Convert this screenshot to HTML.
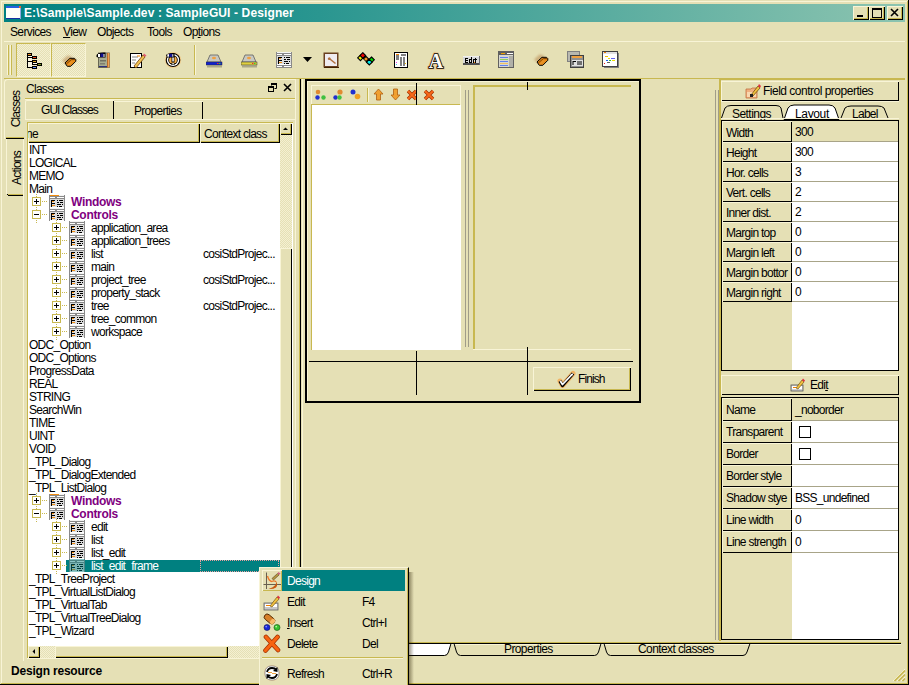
<!DOCTYPE html><html><head><meta charset="utf-8"><style>
html,body{margin:0;padding:0;}
body{width:909px;height:685px;position:relative;overflow:hidden;background:#E5E0B5;font-family:"Liberation Sans",sans-serif;}
div{position:absolute;box-sizing:border-box;}
.t{white-space:nowrap;line-height:1;color:#000;letter-spacing:-0.72px;}
.b{font-weight:bold;letter-spacing:0.2px;}
</style></head><body>
<div style="left:1px;top:1px;width:907px;height:1px;background:#F8F4D6"></div>
<div style="left:1px;top:1px;width:1px;height:683px;background:#F8F4D6"></div>
<div style="left:907px;top:1px;width:1px;height:683px;background:#C8B850"></div>
<div style="left:908px;top:0px;width:1px;height:685px;background:#000000"></div>
<div style="left:1px;top:683px;width:907px;height:1px;background:#C8B850"></div>
<div style="left:0px;top:684px;width:909px;height:1px;background:#000000"></div>
<div style="left:4px;top:4px;width:901px;height:18px;background:linear-gradient(to right,#008080 0%,#2a9690 35%,#8cc4b0 100%)"></div>
<svg style="position:absolute;left:6px;top:6px;" width="15" height="13" viewBox="0 0 15 13"><rect x="0" y="0" width="15" height="13" fill="#fffff8"/><rect x="0" y="0" width="15" height="2" fill="#2860e0"/><rect x="0" y="12" width="15" height="1" fill="#1830a0"/><rect x="14" y="1" width="1" height="12" fill="#90a8e0"/><rect x="13" y="0" width="2" height="2" fill="#e86030"/></svg>
<div class="t" style="left:24px;top:7px;font-size:12px;color:#fff;font-weight:bold;letter-spacing:0.12px">E:\Sample\Sample.dev : SampleGUI - Designer</div>
<div style="left:853px;top:6px;width:16px;height:14px;background:#E5E0B5;box-shadow: inset 1px 1px 0 #F8F4D6, inset -1px -1px 0 #000000, inset -2px -2px 0 #C8B850"></div>
<div style="left:869px;top:6px;width:16px;height:14px;background:#E5E0B5;box-shadow: inset 1px 1px 0 #F8F4D6, inset -1px -1px 0 #000000, inset -2px -2px 0 #C8B850"></div>
<div style="left:887px;top:6px;width:16px;height:14px;background:#E5E0B5;box-shadow: inset 1px 1px 0 #F8F4D6, inset -1px -1px 0 #000000, inset -2px -2px 0 #C8B850"></div>
<svg style="position:absolute;left:853px;top:6px;" width="16" height="14" viewBox="0 0 16 14"><rect x="4" y="9" width="6" height="2" fill="#000"/></svg>
<svg style="position:absolute;left:869px;top:6px;" width="16" height="14" viewBox="0 0 16 14"><rect x="3" y="2" width="9" height="9" fill="none" stroke="#000" stroke-width="1" transform="translate(0.5,0.5)"/><rect x="3" y="2" width="10" height="2" fill="#000"/></svg>
<svg style="position:absolute;left:887px;top:6px;" width="16" height="14" viewBox="0 0 16 14"><path d="M4 3 L11 10 M11 3 L4 10" stroke="#000" stroke-width="1.6"/></svg>
<div class="t" style="left:10px;top:26px;font-size:12px;letter-spacing:-0.63px">Services</div>
<div class="t" style="left:63px;top:26px;font-size:12px;letter-spacing:-0.63px"><u>V</u>iew</div>
<div class="t" style="left:97px;top:26px;font-size:12px;letter-spacing:-0.63px">Objects</div>
<div class="t" style="left:147px;top:26px;font-size:12px;letter-spacing:-0.63px">Tools</div>
<div class="t" style="left:183px;top:26px;font-size:12px;letter-spacing:-0.63px">Op<u>t</u>ions</div>
<div style="left:4px;top:41px;width:901px;height:1px;background:#F8F4D6"></div>
<div style="left:7px;top:45px;width:1px;height:30px;background:#F8F4D6"></div>
<div style="left:8px;top:45px;width:1px;height:30px;background:#C8B850"></div>
<div style="left:10px;top:45px;width:1px;height:30px;background:#F8F4D6"></div>
<div style="left:11px;top:45px;width:1px;height:30px;background:#C8B850"></div>
<div style="left:16px;top:43px;width:35px;height:34px;background-color:#E5E0B5;background-image:repeating-conic-gradient(#F4F0D2 0% 25%, #E5E0B5 0% 50%);background-size:2px 2px;border-top:1px solid #C8B850;border-left:1px solid #C8B850;border-right:1px solid #F8F4D6;border-bottom:1px solid #F8F4D6"></div>
<div style="left:51px;top:43px;width:35px;height:34px;background-color:#E5E0B5;background-image:repeating-conic-gradient(#F4F0D2 0% 25%, #E5E0B5 0% 50%);background-size:2px 2px;border-top:1px solid #C8B850;border-left:1px solid #C8B850;border-right:1px solid #F8F4D6;border-bottom:1px solid #F8F4D6"></div>
<div style="left:194px;top:45px;width:1px;height:30px;background:#C8B850"></div>
<div style="left:195px;top:45px;width:1px;height:30px;background:#F8F4D6"></div>
<div style="left:4px;top:78px;width:901px;height:1px;background:#C8B850"></div>
<svg style="position:absolute;left:26px;top:52px;" width="17" height="18" viewBox="0 0 17 18"><g fill="#000">
<rect x="1" y="1" width="1" height="15"/><rect x="1" y="5" width="5" height="1"/><rect x="1" y="9" width="5" height="1"/><rect x="1" y="15" width="5" height="1"/>
<rect x="6" y="10" width="1" height="3"/><rect x="6" y="12" width="5" height="1"/>
<rect x="1" y="1" width="5" height="3"/><rect x="6" y="4" width="5" height="3"/><rect x="6" y="8" width="5" height="3"/><rect x="11" y="11" width="5" height="3"/><rect x="6" y="14" width="5" height="3"/></g>
<rect x="2" y="4" width="4" height="1" fill="#fffbe8"/><rect x="2" y="6" width="4" height="3" fill="#f8f4e0"/><rect x="2" y="10" width="4" height="5" fill="#f8f4e0"/><rect x="7" y="11" width="4" height="1" fill="#fffbe8"/>
<rect x="2" y="2" width="3" height="1" fill="#f09020"/><rect x="7" y="5" width="3" height="1" fill="#f04818"/><rect x="7" y="9" width="3" height="1" fill="#d8a020"/><rect x="12" y="12" width="3" height="1" fill="#80a020"/><rect x="7" y="15" width="3" height="1" fill="#6090f0"/></svg>
<svg style="position:absolute;left:56px;top:50px;" width="22" height="20" viewBox="0 0 22 20"><defs><filter id="bl56" x="-50%" y="-50%" width="200%" height="200%"><feGaussianBlur stdDeviation="1.2"/></filter></defs>
<path d="M6 10.5 L11.5 5.5 L16 6.5 L15 12 L10 14 Z" fill="#b88850" opacity="0.55" filter="url(#bl56)"/>
<path d="M9 13 L14 8.3 L18.5 8.3 L19.8 9.6 L19.8 11.3 L14.8 16.3 L11.3 16.3 Z" fill="#e48a18" stroke="#000" stroke-width="1"/>
<path d="M10.3 14 L15.3 9.6 H19.5" stroke="#703800" stroke-width="0.9" fill="none"/><path d="M12 15.5 L16 11.5" stroke="#f0a040" stroke-width="0.8"/></svg>
<svg style="position:absolute;left:93px;top:50px;" width="20" height="20" viewBox="0 0 20 20"><rect x="5.5" y="3" width="11" height="14.5" fill="#a8ac90" stroke="#505040" stroke-width="0.8"/>
<rect x="14" y="3" width="2.5" height="14.5" fill="#f0a050"/><rect x="14" y="3" width="0.8" height="14.5" fill="#b06020"/>
<rect x="7" y="10" width="6" height="1.5" fill="#707060"/><rect x="7" y="13" width="5" height="1.5" fill="#808070"/><rect x="6" y="16" width="8" height="1" fill="#303080"/>
<path d="M3.5 5 Q5 2 12.5 2.5 L12.5 7.5 L5 7.5 L3.5 7 Z" fill="#000"/>
<rect x="5" y="4" width="2" height="3" fill="#fff"/><rect x="7.5" y="3.5" width="3" height="3.5" fill="#101090"/><rect x="10.5" y="4" width="1" height="3" fill="#fff"/></svg>
<svg style="position:absolute;left:129px;top:52px;" width="18" height="17" viewBox="0 0 18 17"><rect x="1.5" y="1.5" width="11" height="14" fill="#fff" stroke="#000"/>
<path d="M3 5 H9 M3 8 H7 M3 11 H6" stroke="#808080"/><path d="M8 4 H11" stroke="#f08000"/>
<path d="M5 14 L14 3 L16 5 L7 16 Z" fill="#f0c050" stroke="#704010" stroke-width="0.8"/>
<path d="M14 3 L15 1.5 L17.5 3.5 L16 5 Z" fill="#e06070"/></svg>
<svg style="position:absolute;left:162px;top:50px;" width="22" height="20" viewBox="0 0 22 20"><ellipse cx="11" cy="10" rx="8.2" ry="8" fill="#f8c070" opacity="0.6"/>
<ellipse cx="11" cy="10" rx="7.3" ry="7.1" fill="#000"/><ellipse cx="11" cy="10" rx="6.2" ry="6" fill="#fff"/>
<ellipse cx="11" cy="10" rx="4.8" ry="4.6" fill="#000"/><ellipse cx="11" cy="10" rx="3.9" ry="3.8" fill="#f8b048"/>
<rect x="9.5" y="6" width="3" height="6" fill="#000"/><rect x="10.3" y="6.5" width="1.5" height="5" fill="#fff"/>
<rect x="9.5" y="12.5" width="3" height="2.5" fill="#000"/><rect x="10.3" y="13" width="1.5" height="1.5" fill="#fff"/>
<path d="M4 5 Q5 3 12.5 3 L12.5 7.5 L5 7.5 Z" fill="#000"/><rect x="5.3" y="4.2" width="1.8" height="2.5" fill="#fff"/><rect x="7.2" y="3.8" width="3" height="3.2" fill="#101090"/><rect x="10.3" y="4.2" width="1" height="2.5" fill="#fff"/></svg>
<svg style="position:absolute;left:206px;top:54px;" width="17" height="15" viewBox="0 0 17 15"><path d="M4 1 H12 L15 8 H1 Z" fill="#c8c8c0" stroke="#606060" stroke-width="0.8"/>
<ellipse cx="8" cy="4" rx="2" ry="1.2" fill="#f0a040"/>
<rect x="0" y="8" width="16" height="3" fill="#1020d0" stroke="#303030" stroke-width="0.5"/>
<rect x="11" y="9" width="1.5" height="1" fill="#f03030"/><rect x="13" y="9" width="1.5" height="1" fill="#30d030"/>
<rect x="1" y="11.5" width="15" height="2" fill="#000" opacity="0.25"/></svg>
<svg style="position:absolute;left:241px;top:54px;" width="17" height="15" viewBox="0 0 17 15"><path d="M4 1 H12 L15 8 H1 Z" fill="#c8c8c0" stroke="#606060" stroke-width="0.8"/>
<ellipse cx="8" cy="4" rx="2" ry="1.2" fill="#f0a040"/>
<rect x="0" y="8" width="16" height="3" fill="#e0d040" stroke="#303030" stroke-width="0.5"/>
<rect x="11" y="9" width="1.5" height="1" fill="#f03030"/><rect x="13" y="9" width="1.5" height="1" fill="#30d030"/>
<rect x="1" y="11.5" width="15" height="2" fill="#000" opacity="0.25"/></svg>
<svg style="position:absolute;left:276px;top:52px;overflow:hidden" width="16" height="16" viewBox="0 0 16 16"><rect x="0" y="0" width="16" height="16" fill="#8a8a8a"/><rect x="1" y="0" width="14" height="1" fill="#f4f4f4"/>
<rect x="1" y="2" width="5" height="1" fill="#fff"/><rect x="8" y="2" width="7" height="1" fill="#fff"/>
<rect x="1" y="4" width="14" height="8" fill="#dcdcdc"/>
<g fill="#000"><rect x="2" y="5" width="4" height="1"/><rect x="2" y="5" width="1" height="3"/><rect x="2" y="8" width="4" height="1"/><rect x="2" y="8" width="1" height="4"/>
<rect x="8" y="5" width="1" height="1"/><rect x="10" y="5" width="4" height="1"/><rect x="8" y="7" width="2" height="1"/><rect x="11" y="7" width="3" height="1"/>
<rect x="8" y="9" width="4" height="1"/><rect x="13" y="9" width="1" height="1"/><rect x="8" y="11" width="1" height="1"/><rect x="10" y="11" width="3" height="1"/></g>
<rect x="3" y="6" width="2" height="1" fill="#f08c10"/><rect x="3" y="10" width="3" height="1" fill="#f08c10"/>
<rect x="1" y="12" width="14" height="1" fill="#fff"/>
<rect x="1" y="14" width="5" height="1" fill="#fff"/><rect x="8" y="14" width="7" height="1" fill="#fff"/></svg>
<svg style="position:absolute;left:303px;top:57px;" width="10" height="6" viewBox="0 0 10 6"><path d="M0 0 H9 L4.5 5 Z" fill="#000"/></svg>
<svg style="position:absolute;left:323px;top:52px;" width="16" height="16" viewBox="0 0 16 16"><rect x="0.5" y="0.5" width="15" height="15" fill="#6a4020"/><rect x="2" y="2" width="12" height="12" fill="#f0ecf0"/>
<path d="M5 6 Q7 4 8 7 L13 11 L12 12 L7 8 Q4 8 5 6 Z" fill="#b07040"/><rect x="1" y="15" width="15" height="1" fill="#402000"/></svg>
<svg style="position:absolute;left:357px;top:52px;" width="19" height="15" viewBox="0 0 19 15"><path d="M5.8 3.5 L12.3 10.2" stroke="#000" stroke-width="4.6"/>
<path d="M3.5 3 L6 5.8 L3.5 8.6 L0.7 5.8 Z" fill="#f0f000" stroke="#000" stroke-width="1.1"/>
<path d="M5.8 0.7 L8.6 3.5 L5.8 6.3 L3 3.5 Z" fill="#f00000" stroke="#000" stroke-width="1.1"/>
<circle cx="9" cy="7" r="1.6" fill="#f09020"/>
<path d="M14.5 5 L17.3 7.8 L14.5 10.6 L11.7 7.8 Z" fill="#00e000" stroke="#000" stroke-width="1.1"/>
<path d="M12.3 7.4 L15.1 10.2 L12.3 13 L9.5 10.2 Z" fill="#00f0f0" stroke="#000" stroke-width="1.1"/></svg>
<svg style="position:absolute;left:394px;top:52px;" width="14" height="16" viewBox="0 0 14 16"><rect x="0.5" y="0.5" width="13" height="15" fill="#fff" stroke="#000"/>
<path d="M2 3 H5 M7 3 H12 M2 5 H5 M2 7 H5 M7 5 V14 M10 5 V14" stroke="#000"/><rect x="2" y="2" width="3" height="1" fill="#f08000"/>
<rect x="2" y="10" width="1" height="1" fill="#f040f0"/><rect x="2" y="12" width="1" height="1" fill="#40c0f0"/><rect x="11" y="11" width="1" height="1" fill="#f0c000"/></svg>
<svg style="position:absolute;left:426px;top:50px;" width="20" height="20" viewBox="0 0 20 20"><text x="10" y="17.5" text-anchor="middle" font-family="Liberation Serif" font-size="20" font-weight="bold" fill="#fff" stroke="#f0a050" stroke-width="3.2" stroke-opacity="0.5" style="paint-order:stroke">A</text>
<text x="10" y="17.5" text-anchor="middle" font-family="Liberation Serif" font-size="20" font-weight="bold" fill="#fcfcf8" stroke="#000" stroke-width="1.7" style="paint-order:stroke">A</text></svg>
<svg style="position:absolute;left:463px;top:56px;" width="17" height="9" viewBox="0 0 17 9"><rect x="0" y="0" width="16" height="8" fill="#d8d8d8"/><rect x="0" y="0" width="16" height="1" fill="#f0f0f0"/><rect x="0" y="7" width="17" height="2" fill="#505050"/><rect x="16" y="0" width="1" height="9" fill="#707070"/>
<g fill="#000"><rect x="2" y="2" width="1" height="5"/><rect x="2" y="2" width="3" height="1"/><rect x="2" y="4" width="3" height="1"/><rect x="2" y="6" width="3" height="1"/>
<rect x="6" y="3" width="3" height="4"/><rect x="8" y="1" width="1" height="6"/><rect x="10" y="3" width="1" height="4"/><rect x="12" y="2" width="1" height="5"/><rect x="11" y="3" width="3" height="1"/></g>
<rect x="7" y="4" width="1" height="2" fill="#d8d8d8"/><rect x="11" y="6" width="1" height="1" fill="#f08000"/></svg>
<svg style="position:absolute;left:498px;top:51px;" width="17" height="17" viewBox="0 0 17 17"><rect x="0.5" y="0.5" width="15" height="16" fill="#d8d8d0" stroke="#606060"/>
<rect x="1" y="1" width="15" height="3" fill="#606060"/><rect x="3" y="2" width="4" height="1" fill="#f0a000"/><rect x="9" y="2" width="6" height="1" fill="#fff"/>
<rect x="2" y="6" width="8" height="1" fill="#6080f0"/><rect x="2" y="8" width="8" height="1" fill="#90d060"/><rect x="2" y="10" width="8" height="1" fill="#6080f0"/><rect x="2" y="12" width="8" height="1" fill="#f0c060"/><rect x="2" y="14" width="8" height="1" fill="#6080f0"/>
<rect x="11" y="5" width="4" height="11" fill="#b0b0a8"/></svg>
<svg style="position:absolute;left:528px;top:49px;" width="22" height="20" viewBox="0 0 22 20"><defs><filter id="bl528" x="-50%" y="-50%" width="200%" height="200%"><feGaussianBlur stdDeviation="1.2"/></filter></defs>
<path d="M6 10.5 L11.5 5.5 L16 6.5 L15 12 L10 14 Z" fill="#b88850" opacity="0.55" filter="url(#bl528)"/>
<path d="M9 13 L14 8.3 L18.5 8.3 L19.8 9.6 L19.8 11.3 L14.8 16.3 L11.3 16.3 Z" fill="#e48a18" stroke="#000" stroke-width="1"/>
<path d="M10.3 14 L15.3 9.6 H19.5" stroke="#703800" stroke-width="0.9" fill="none"/><path d="M12 15.5 L16 11.5" stroke="#f0a040" stroke-width="0.8"/></svg>
<svg style="position:absolute;left:567px;top:51px;" width="17" height="17" viewBox="0 0 17 17"><rect x="0.5" y="0.5" width="12" height="10" fill="#b8b8b0" stroke="#808080"/>
<rect x="3.5" y="4.5" width="13" height="12" fill="#909090" stroke="#404040"/>
<rect x="5" y="5" width="10" height="2" fill="#f0a040"/><rect x="5" y="9" width="11" height="6" fill="#e0e0e0"/>
<path d="M6 10.5 H9 M6 10 V14 M10 11 H15 M10 13 H15" stroke="#000"/></svg>
<svg style="position:absolute;left:602px;top:51px;" width="17" height="17" viewBox="0 0 17 17"><rect x="0.5" y="0.5" width="15" height="15" fill="#fff" stroke="#404040"/><rect x="16" y="2" width="1" height="15" fill="#808080"/><rect x="2" y="16" width="15" height="1" fill="#808080"/>
<rect x="1" y="1" width="14" height="2" fill="#e0e0e0"/><rect x="2" y="1" width="2" height="1" fill="#f08000"/>
<rect x="3" y="5" width="3" height="1" fill="#f0c000"/><rect x="6" y="7" width="2" height="1" fill="#f0e000"/><rect x="9" y="7" width="4" height="1" fill="#6060f0"/>
<rect x="4" y="9" width="2" height="1" fill="#2060f0"/><rect x="7" y="9" width="2" height="1" fill="#30c030"/><rect x="10" y="9" width="3" height="1" fill="#f0e000"/><rect x="2" y="12" width="1" height="1" fill="#f02020"/><rect x="5" y="11" width="3" height="1" fill="#606060"/></svg>
<div style="left:4px;top:79px;width:292px;height:60px;border-top:1px solid #F8F4D6;border-left:1px solid #F8F4D6;border-top-left-radius:4px"></div>
<div style="left:6px;top:137px;width:18px;height:1px;background:#C8B850"></div>
<div style="left:6px;top:138px;width:18px;height:1px;background:#000000"></div>
<div style="left:6px;top:139px;width:1px;height:55px;background:#F8F4D6"></div>
<div style="left:8px;top:194px;width:15px;height:1px;background:#C8B850"></div>
<div style="left:8px;top:195px;width:15px;height:1px;background:#000000"></div>
<div style="left:7px;top:194px;width:1px;height:1px;background:#000000"></div>
<div class="t" style="left:-3px;top:103px;width:38px;height:12px;font-size:12px;text-align:center;transform:rotate(-90deg);letter-spacing:-0.9px">Classes</div>
<div class="t" style="left:-2px;top:162px;width:38px;height:12px;font-size:12px;text-align:center;transform:rotate(-90deg);letter-spacing:-0.8px">Actions</div>
<div style="left:23px;top:139px;width:1px;height:522px;background:#F8F4D6"></div>
<div style="left:295px;top:80px;width:1px;height:581px;background:#F8F4D6"></div>
<div class="t" style="left:26px;top:83px;font-size:12px;">Classes</div>
<svg style="position:absolute;left:268px;top:83px;" width="9" height="9" viewBox="0 0 9 9"><path d="M3.5 0.5 H8.5 V5.5 H6.5 M3.5 0.5 V2.5" fill="none" stroke="#000"/><rect x="3" y="0" width="6" height="2" fill="#000"/><rect x="0.5" y="3.5" width="5" height="5" fill="none" stroke="#000"/><rect x="0" y="3" width="6" height="2" fill="#000"/></svg>
<svg style="position:absolute;left:283px;top:83px;" width="9" height="9" viewBox="0 0 9 9"><path d="M1 1 L8 8 M8 1 L1 8" stroke="#000" stroke-width="1.6"/></svg>
<div style="left:25px;top:98px;width:270px;height:1px;background:#C8B850"></div>
<div style="left:25px;top:99px;width:270px;height:1px;background:#F8F4D6"></div>
<div style="left:25px;top:100px;width:89px;height:19px;border-top:1px solid #F8F4D6;border-left:1px solid #F8F4D6;border-top-left-radius:2px"></div>
<div style="left:113px;top:101px;width:1px;height:18px;background:#000000"></div>
<div class="t" style="left:41px;top:104px;font-size:12px;letter-spacing:-0.95px">GUI Classes</div>
<div style="left:114px;top:101px;width:89px;height:18px;border-top:1px solid #F8F4D6;"></div>
<div style="left:202px;top:102px;width:1px;height:17px;background:#000000"></div>
<div class="t" style="left:134px;top:105px;font-size:12px;">Properties</div>
<div style="left:25px;top:119px;width:270px;height:1px;background:#F8F4D6"></div>
<div style="left:27px;top:122px;width:266px;height:536px;background:#fff;border-left:1px solid #C8B850;border-top:1px solid #C8B850"></div>
<div style="left:27px;top:658px;width:266px;height:1px;background:#F8F4D6"></div>
<div style="left:28px;top:123px;width:172px;height:20px;background:#E5E0B5;box-shadow: inset 1px 1px 0 #F8F4D6, inset -1px -1px 0 #000000, inset -2px -2px 0 #C8B850"></div>
<div style="left:200px;top:123px;width:80px;height:20px;background:#E5E0B5;box-shadow: inset 1px 1px 0 #F8F4D6, inset -1px -1px 0 #000000, inset -2px -2px 0 #C8B850"></div>
<div style="left:28px;top:123px;width:20px;height:18px;overflow:hidden">
<div class="t" style="left:-2px;top:5px;font-size:12px;">ne</div>
</div>
<div class="t" style="left:204px;top:128px;font-size:12px;">Context class</div>
<div style="left:280px;top:123px;width:12px;height:536px;background-color:#E5E0B5;background-image:repeating-conic-gradient(#F4F0D2 0% 25%, #E5E0B5 0% 50%);background-size:2px 2px"></div>
<div style="left:280px;top:123px;width:12px;height:12px;background:#E5E0B5;box-shadow: inset 1px 1px 0 #F8F4D6, inset -1px -1px 0 #000000, inset -2px -2px 0 #C8B850"></div>
<svg style="position:absolute;left:280px;top:123px;" width="12" height="12" viewBox="0 0 12 12"><path d="M3 7 H8 L5.5 4.5 Z" fill="#000"/></svg>
<div style="left:280px;top:248px;width:12px;height:398px;background:#E5E0B5;box-shadow: inset 1px 1px 0 #F8F4D6, inset -1px 0 0 #000000"></div>
<div style="left:28px;top:646px;width:252px;height:12px;background-color:#E5E0B5;background-image:repeating-conic-gradient(#F4F0D2 0% 25%, #E5E0B5 0% 50%);background-size:2px 2px"></div>
<div style="left:28px;top:646px;width:12px;height:12px;background:#E5E0B5;box-shadow: inset 1px 1px 0 #F8F4D6, inset -1px -1px 0 #000000, inset -2px -2px 0 #C8B850"></div>
<svg style="position:absolute;left:28px;top:646px;" width="12" height="12" viewBox="0 0 12 12"><path d="M7 3 V8 L4.5 5.5 Z" fill="#000"/></svg>
<div style="left:55px;top:646px;width:173px;height:12px;background:#E5E0B5;box-shadow: inset 1px 1px 0 #F8F4D6, inset -1px -1px 0 #000000, inset -2px -2px 0 #C8B850"></div>
<div style="left:280px;top:646px;width:12px;height:12px;background:#E5E0B5"></div>
<div style="left:28px;top:142px;width:252px;height:504px;overflow:hidden">
<div class="t" style="left:1px;top:2px;font-size:12px;">INT</div>
<div class="t" style="left:1px;top:15px;font-size:12px;">LOGICAL</div>
<div class="t" style="left:1px;top:28px;font-size:12px;">MEMO</div>
<div class="t" style="left:1px;top:41px;font-size:12px;">Main</div>
<div style="left:4px;top:55px;width:9px;height:9px;background:#fff;border:1px solid #C8B850"></div>
<svg style="position:absolute;left:4px;top:55px;" width="9" height="9" viewBox="0 0 9 9"><rect x="2" y="4" width="5" height="1" fill="#000"/><rect x="4" y="2" width="1" height="5" fill="#000"/></svg>
<svg style="position:absolute;left:13px;top:59px;" width="6" height="1" viewBox="0 0 6 1"><rect x="1" y="0" width="1" height="1" fill="#C8B850"/><rect x="3" y="0" width="1" height="1" fill="#C8B850"/><rect x="5" y="0" width="1" height="1" fill="#C8B850"/></svg>
<svg style="position:absolute;left:8px;top:51px;" width="1" height="4" viewBox="0 0 1 4"><rect x="0" y="1" width="1" height="1" fill="#C8B850"/><rect x="0" y="3" width="1" height="1" fill="#C8B850"/></svg>
<svg style="position:absolute;left:8px;top:64px;" width="1" height="4" viewBox="0 0 1 4"><rect x="0" y="1" width="1" height="1" fill="#C8B850"/><rect x="0" y="3" width="1" height="1" fill="#C8B850"/></svg>
<svg style="position:absolute;left:21px;top:53px;overflow:hidden" width="16" height="13" viewBox="0 0 16 13"><rect x="0" y="0" width="16" height="16" fill="#8a8a8a"/><rect x="1" y="0" width="14" height="1" fill="#f4f4f4"/>
<rect x="1" y="2" width="5" height="1" fill="#fff"/><rect x="8" y="2" width="7" height="1" fill="#fff"/>
<rect x="1" y="4" width="14" height="8" fill="#dcdcdc"/>
<g fill="#000"><rect x="2" y="5" width="4" height="1"/><rect x="2" y="5" width="1" height="3"/><rect x="2" y="8" width="4" height="1"/><rect x="2" y="8" width="1" height="4"/>
<rect x="8" y="5" width="1" height="1"/><rect x="10" y="5" width="4" height="1"/><rect x="8" y="7" width="2" height="1"/><rect x="11" y="7" width="3" height="1"/>
<rect x="8" y="9" width="4" height="1"/><rect x="13" y="9" width="1" height="1"/><rect x="8" y="11" width="1" height="1"/><rect x="10" y="11" width="3" height="1"/></g>
<rect x="3" y="6" width="2" height="1" fill="#f08c10"/><rect x="3" y="10" width="3" height="1" fill="#f08c10"/>
<rect x="1" y="12" width="14" height="1" fill="#fff"/>
<rect x="1" y="14" width="5" height="1" fill="#fff"/><rect x="8" y="14" width="7" height="1" fill="#fff"/><rect x="1" y="0" width="9" height="1" fill="#f08c10"/></svg>
<div class="t" style="left:43px;top:54px;font-size:12px;color:#800080;font-weight:bold;letter-spacing:-0.3px">Windows</div>
<div style="left:4px;top:68px;width:9px;height:9px;background:#fff;border:1px solid #C8B850"></div>
<svg style="position:absolute;left:4px;top:68px;" width="9" height="9" viewBox="0 0 9 9"><rect x="2" y="4" width="5" height="1" fill="#000"/></svg>
<svg style="position:absolute;left:13px;top:72px;" width="6" height="1" viewBox="0 0 6 1"><rect x="1" y="0" width="1" height="1" fill="#C8B850"/><rect x="3" y="0" width="1" height="1" fill="#C8B850"/><rect x="5" y="0" width="1" height="1" fill="#C8B850"/></svg>
<svg style="position:absolute;left:8px;top:64px;" width="1" height="4" viewBox="0 0 1 4"><rect x="0" y="1" width="1" height="1" fill="#C8B850"/><rect x="0" y="3" width="1" height="1" fill="#C8B850"/></svg>
<svg style="position:absolute;left:8px;top:77px;" width="1" height="4" viewBox="0 0 1 4"><rect x="0" y="1" width="1" height="1" fill="#C8B850"/><rect x="0" y="3" width="1" height="1" fill="#C8B850"/></svg>
<svg style="position:absolute;left:21px;top:66px;overflow:hidden" width="16" height="13" viewBox="0 0 16 13"><rect x="0" y="0" width="16" height="16" fill="#8a8a8a"/><rect x="1" y="0" width="14" height="1" fill="#f4f4f4"/>
<rect x="1" y="2" width="5" height="1" fill="#fff"/><rect x="8" y="2" width="7" height="1" fill="#fff"/>
<rect x="1" y="4" width="14" height="8" fill="#dcdcdc"/>
<g fill="#000"><rect x="2" y="5" width="4" height="1"/><rect x="2" y="5" width="1" height="3"/><rect x="2" y="8" width="4" height="1"/><rect x="2" y="8" width="1" height="4"/>
<rect x="8" y="5" width="1" height="1"/><rect x="10" y="5" width="4" height="1"/><rect x="8" y="7" width="2" height="1"/><rect x="11" y="7" width="3" height="1"/>
<rect x="8" y="9" width="4" height="1"/><rect x="13" y="9" width="1" height="1"/><rect x="8" y="11" width="1" height="1"/><rect x="10" y="11" width="3" height="1"/></g>
<rect x="3" y="6" width="2" height="1" fill="#f08c10"/><rect x="3" y="10" width="3" height="1" fill="#f08c10"/>
<rect x="1" y="12" width="14" height="1" fill="#fff"/>
<rect x="1" y="14" width="5" height="1" fill="#fff"/><rect x="8" y="14" width="7" height="1" fill="#fff"/></svg>
<div class="t" style="left:43px;top:67px;font-size:12px;color:#800080;font-weight:bold;letter-spacing:-0.3px">Controls</div>
<div style="left:24px;top:81px;width:9px;height:9px;background:#fff;border:1px solid #C8B850"></div>
<svg style="position:absolute;left:24px;top:81px;" width="9" height="9" viewBox="0 0 9 9"><rect x="2" y="4" width="5" height="1" fill="#000"/><rect x="4" y="2" width="1" height="5" fill="#000"/></svg>
<svg style="position:absolute;left:33px;top:85px;" width="6" height="1" viewBox="0 0 6 1"><rect x="1" y="0" width="1" height="1" fill="#C8B850"/><rect x="3" y="0" width="1" height="1" fill="#C8B850"/><rect x="5" y="0" width="1" height="1" fill="#C8B850"/></svg>
<svg style="position:absolute;left:28px;top:77px;" width="1" height="4" viewBox="0 0 1 4"><rect x="0" y="1" width="1" height="1" fill="#C8B850"/><rect x="0" y="3" width="1" height="1" fill="#C8B850"/></svg>
<svg style="position:absolute;left:28px;top:90px;" width="1" height="4" viewBox="0 0 1 4"><rect x="0" y="1" width="1" height="1" fill="#C8B850"/><rect x="0" y="3" width="1" height="1" fill="#C8B850"/></svg>
<svg style="position:absolute;left:41px;top:79px;overflow:hidden" width="16" height="13" viewBox="0 0 16 13"><rect x="0" y="0" width="16" height="16" fill="#8a8a8a"/><rect x="1" y="0" width="14" height="1" fill="#f4f4f4"/>
<rect x="1" y="2" width="5" height="1" fill="#fff"/><rect x="8" y="2" width="7" height="1" fill="#fff"/>
<rect x="1" y="4" width="14" height="8" fill="#dcdcdc"/>
<g fill="#000"><rect x="2" y="5" width="4" height="1"/><rect x="2" y="5" width="1" height="3"/><rect x="2" y="8" width="4" height="1"/><rect x="2" y="8" width="1" height="4"/>
<rect x="8" y="5" width="1" height="1"/><rect x="10" y="5" width="4" height="1"/><rect x="8" y="7" width="2" height="1"/><rect x="11" y="7" width="3" height="1"/>
<rect x="8" y="9" width="4" height="1"/><rect x="13" y="9" width="1" height="1"/><rect x="8" y="11" width="1" height="1"/><rect x="10" y="11" width="3" height="1"/></g>
<rect x="3" y="6" width="2" height="1" fill="#f08c10"/><rect x="3" y="10" width="3" height="1" fill="#f08c10"/>
<rect x="1" y="12" width="14" height="1" fill="#fff"/>
<rect x="1" y="14" width="5" height="1" fill="#fff"/><rect x="8" y="14" width="7" height="1" fill="#fff"/></svg>
<div class="t" style="left:63px;top:80px;font-size:12px;color:#000">application_area</div>
<div style="left:24px;top:94px;width:9px;height:9px;background:#fff;border:1px solid #C8B850"></div>
<svg style="position:absolute;left:24px;top:94px;" width="9" height="9" viewBox="0 0 9 9"><rect x="2" y="4" width="5" height="1" fill="#000"/><rect x="4" y="2" width="1" height="5" fill="#000"/></svg>
<svg style="position:absolute;left:33px;top:98px;" width="6" height="1" viewBox="0 0 6 1"><rect x="1" y="0" width="1" height="1" fill="#C8B850"/><rect x="3" y="0" width="1" height="1" fill="#C8B850"/><rect x="5" y="0" width="1" height="1" fill="#C8B850"/></svg>
<svg style="position:absolute;left:28px;top:90px;" width="1" height="4" viewBox="0 0 1 4"><rect x="0" y="1" width="1" height="1" fill="#C8B850"/><rect x="0" y="3" width="1" height="1" fill="#C8B850"/></svg>
<svg style="position:absolute;left:28px;top:103px;" width="1" height="4" viewBox="0 0 1 4"><rect x="0" y="1" width="1" height="1" fill="#C8B850"/><rect x="0" y="3" width="1" height="1" fill="#C8B850"/></svg>
<svg style="position:absolute;left:41px;top:92px;overflow:hidden" width="16" height="13" viewBox="0 0 16 13"><rect x="0" y="0" width="16" height="16" fill="#8a8a8a"/><rect x="1" y="0" width="14" height="1" fill="#f4f4f4"/>
<rect x="1" y="2" width="5" height="1" fill="#fff"/><rect x="8" y="2" width="7" height="1" fill="#fff"/>
<rect x="1" y="4" width="14" height="8" fill="#dcdcdc"/>
<g fill="#000"><rect x="2" y="5" width="4" height="1"/><rect x="2" y="5" width="1" height="3"/><rect x="2" y="8" width="4" height="1"/><rect x="2" y="8" width="1" height="4"/>
<rect x="8" y="5" width="1" height="1"/><rect x="10" y="5" width="4" height="1"/><rect x="8" y="7" width="2" height="1"/><rect x="11" y="7" width="3" height="1"/>
<rect x="8" y="9" width="4" height="1"/><rect x="13" y="9" width="1" height="1"/><rect x="8" y="11" width="1" height="1"/><rect x="10" y="11" width="3" height="1"/></g>
<rect x="3" y="6" width="2" height="1" fill="#f08c10"/><rect x="3" y="10" width="3" height="1" fill="#f08c10"/>
<rect x="1" y="12" width="14" height="1" fill="#fff"/>
<rect x="1" y="14" width="5" height="1" fill="#fff"/><rect x="8" y="14" width="7" height="1" fill="#fff"/></svg>
<div class="t" style="left:63px;top:93px;font-size:12px;color:#000">application_trees</div>
<div style="left:24px;top:107px;width:9px;height:9px;background:#fff;border:1px solid #C8B850"></div>
<svg style="position:absolute;left:24px;top:107px;" width="9" height="9" viewBox="0 0 9 9"><rect x="2" y="4" width="5" height="1" fill="#000"/><rect x="4" y="2" width="1" height="5" fill="#000"/></svg>
<svg style="position:absolute;left:33px;top:111px;" width="6" height="1" viewBox="0 0 6 1"><rect x="1" y="0" width="1" height="1" fill="#C8B850"/><rect x="3" y="0" width="1" height="1" fill="#C8B850"/><rect x="5" y="0" width="1" height="1" fill="#C8B850"/></svg>
<svg style="position:absolute;left:28px;top:103px;" width="1" height="4" viewBox="0 0 1 4"><rect x="0" y="1" width="1" height="1" fill="#C8B850"/><rect x="0" y="3" width="1" height="1" fill="#C8B850"/></svg>
<svg style="position:absolute;left:28px;top:116px;" width="1" height="4" viewBox="0 0 1 4"><rect x="0" y="1" width="1" height="1" fill="#C8B850"/><rect x="0" y="3" width="1" height="1" fill="#C8B850"/></svg>
<svg style="position:absolute;left:41px;top:105px;overflow:hidden" width="16" height="13" viewBox="0 0 16 13"><rect x="0" y="0" width="16" height="16" fill="#8a8a8a"/><rect x="1" y="0" width="14" height="1" fill="#f4f4f4"/>
<rect x="1" y="2" width="5" height="1" fill="#fff"/><rect x="8" y="2" width="7" height="1" fill="#fff"/>
<rect x="1" y="4" width="14" height="8" fill="#dcdcdc"/>
<g fill="#000"><rect x="2" y="5" width="4" height="1"/><rect x="2" y="5" width="1" height="3"/><rect x="2" y="8" width="4" height="1"/><rect x="2" y="8" width="1" height="4"/>
<rect x="8" y="5" width="1" height="1"/><rect x="10" y="5" width="4" height="1"/><rect x="8" y="7" width="2" height="1"/><rect x="11" y="7" width="3" height="1"/>
<rect x="8" y="9" width="4" height="1"/><rect x="13" y="9" width="1" height="1"/><rect x="8" y="11" width="1" height="1"/><rect x="10" y="11" width="3" height="1"/></g>
<rect x="3" y="6" width="2" height="1" fill="#f08c10"/><rect x="3" y="10" width="3" height="1" fill="#f08c10"/>
<rect x="1" y="12" width="14" height="1" fill="#fff"/>
<rect x="1" y="14" width="5" height="1" fill="#fff"/><rect x="8" y="14" width="7" height="1" fill="#fff"/></svg>
<div class="t" style="left:63px;top:106px;font-size:12px;color:#000">list</div>
<div class="t" style="left:175px;top:106px;font-size:12px;">cosiStdProjec...</div>
<div style="left:24px;top:120px;width:9px;height:9px;background:#fff;border:1px solid #C8B850"></div>
<svg style="position:absolute;left:24px;top:120px;" width="9" height="9" viewBox="0 0 9 9"><rect x="2" y="4" width="5" height="1" fill="#000"/><rect x="4" y="2" width="1" height="5" fill="#000"/></svg>
<svg style="position:absolute;left:33px;top:124px;" width="6" height="1" viewBox="0 0 6 1"><rect x="1" y="0" width="1" height="1" fill="#C8B850"/><rect x="3" y="0" width="1" height="1" fill="#C8B850"/><rect x="5" y="0" width="1" height="1" fill="#C8B850"/></svg>
<svg style="position:absolute;left:28px;top:116px;" width="1" height="4" viewBox="0 0 1 4"><rect x="0" y="1" width="1" height="1" fill="#C8B850"/><rect x="0" y="3" width="1" height="1" fill="#C8B850"/></svg>
<svg style="position:absolute;left:28px;top:129px;" width="1" height="4" viewBox="0 0 1 4"><rect x="0" y="1" width="1" height="1" fill="#C8B850"/><rect x="0" y="3" width="1" height="1" fill="#C8B850"/></svg>
<svg style="position:absolute;left:41px;top:118px;overflow:hidden" width="16" height="13" viewBox="0 0 16 13"><rect x="0" y="0" width="16" height="16" fill="#8a8a8a"/><rect x="1" y="0" width="14" height="1" fill="#f4f4f4"/>
<rect x="1" y="2" width="5" height="1" fill="#fff"/><rect x="8" y="2" width="7" height="1" fill="#fff"/>
<rect x="1" y="4" width="14" height="8" fill="#dcdcdc"/>
<g fill="#000"><rect x="2" y="5" width="4" height="1"/><rect x="2" y="5" width="1" height="3"/><rect x="2" y="8" width="4" height="1"/><rect x="2" y="8" width="1" height="4"/>
<rect x="8" y="5" width="1" height="1"/><rect x="10" y="5" width="4" height="1"/><rect x="8" y="7" width="2" height="1"/><rect x="11" y="7" width="3" height="1"/>
<rect x="8" y="9" width="4" height="1"/><rect x="13" y="9" width="1" height="1"/><rect x="8" y="11" width="1" height="1"/><rect x="10" y="11" width="3" height="1"/></g>
<rect x="3" y="6" width="2" height="1" fill="#f08c10"/><rect x="3" y="10" width="3" height="1" fill="#f08c10"/>
<rect x="1" y="12" width="14" height="1" fill="#fff"/>
<rect x="1" y="14" width="5" height="1" fill="#fff"/><rect x="8" y="14" width="7" height="1" fill="#fff"/></svg>
<div class="t" style="left:63px;top:119px;font-size:12px;color:#000">main</div>
<div style="left:24px;top:133px;width:9px;height:9px;background:#fff;border:1px solid #C8B850"></div>
<svg style="position:absolute;left:24px;top:133px;" width="9" height="9" viewBox="0 0 9 9"><rect x="2" y="4" width="5" height="1" fill="#000"/><rect x="4" y="2" width="1" height="5" fill="#000"/></svg>
<svg style="position:absolute;left:33px;top:137px;" width="6" height="1" viewBox="0 0 6 1"><rect x="1" y="0" width="1" height="1" fill="#C8B850"/><rect x="3" y="0" width="1" height="1" fill="#C8B850"/><rect x="5" y="0" width="1" height="1" fill="#C8B850"/></svg>
<svg style="position:absolute;left:28px;top:129px;" width="1" height="4" viewBox="0 0 1 4"><rect x="0" y="1" width="1" height="1" fill="#C8B850"/><rect x="0" y="3" width="1" height="1" fill="#C8B850"/></svg>
<svg style="position:absolute;left:28px;top:142px;" width="1" height="4" viewBox="0 0 1 4"><rect x="0" y="1" width="1" height="1" fill="#C8B850"/><rect x="0" y="3" width="1" height="1" fill="#C8B850"/></svg>
<svg style="position:absolute;left:41px;top:131px;overflow:hidden" width="16" height="13" viewBox="0 0 16 13"><rect x="0" y="0" width="16" height="16" fill="#8a8a8a"/><rect x="1" y="0" width="14" height="1" fill="#f4f4f4"/>
<rect x="1" y="2" width="5" height="1" fill="#fff"/><rect x="8" y="2" width="7" height="1" fill="#fff"/>
<rect x="1" y="4" width="14" height="8" fill="#dcdcdc"/>
<g fill="#000"><rect x="2" y="5" width="4" height="1"/><rect x="2" y="5" width="1" height="3"/><rect x="2" y="8" width="4" height="1"/><rect x="2" y="8" width="1" height="4"/>
<rect x="8" y="5" width="1" height="1"/><rect x="10" y="5" width="4" height="1"/><rect x="8" y="7" width="2" height="1"/><rect x="11" y="7" width="3" height="1"/>
<rect x="8" y="9" width="4" height="1"/><rect x="13" y="9" width="1" height="1"/><rect x="8" y="11" width="1" height="1"/><rect x="10" y="11" width="3" height="1"/></g>
<rect x="3" y="6" width="2" height="1" fill="#f08c10"/><rect x="3" y="10" width="3" height="1" fill="#f08c10"/>
<rect x="1" y="12" width="14" height="1" fill="#fff"/>
<rect x="1" y="14" width="5" height="1" fill="#fff"/><rect x="8" y="14" width="7" height="1" fill="#fff"/></svg>
<div class="t" style="left:63px;top:132px;font-size:12px;color:#000">project_tree</div>
<div class="t" style="left:175px;top:132px;font-size:12px;">cosiStdProjec...</div>
<div style="left:24px;top:146px;width:9px;height:9px;background:#fff;border:1px solid #C8B850"></div>
<svg style="position:absolute;left:24px;top:146px;" width="9" height="9" viewBox="0 0 9 9"><rect x="2" y="4" width="5" height="1" fill="#000"/><rect x="4" y="2" width="1" height="5" fill="#000"/></svg>
<svg style="position:absolute;left:33px;top:150px;" width="6" height="1" viewBox="0 0 6 1"><rect x="1" y="0" width="1" height="1" fill="#C8B850"/><rect x="3" y="0" width="1" height="1" fill="#C8B850"/><rect x="5" y="0" width="1" height="1" fill="#C8B850"/></svg>
<svg style="position:absolute;left:28px;top:142px;" width="1" height="4" viewBox="0 0 1 4"><rect x="0" y="1" width="1" height="1" fill="#C8B850"/><rect x="0" y="3" width="1" height="1" fill="#C8B850"/></svg>
<svg style="position:absolute;left:28px;top:155px;" width="1" height="4" viewBox="0 0 1 4"><rect x="0" y="1" width="1" height="1" fill="#C8B850"/><rect x="0" y="3" width="1" height="1" fill="#C8B850"/></svg>
<svg style="position:absolute;left:41px;top:144px;overflow:hidden" width="16" height="13" viewBox="0 0 16 13"><rect x="0" y="0" width="16" height="16" fill="#8a8a8a"/><rect x="1" y="0" width="14" height="1" fill="#f4f4f4"/>
<rect x="1" y="2" width="5" height="1" fill="#fff"/><rect x="8" y="2" width="7" height="1" fill="#fff"/>
<rect x="1" y="4" width="14" height="8" fill="#dcdcdc"/>
<g fill="#000"><rect x="2" y="5" width="4" height="1"/><rect x="2" y="5" width="1" height="3"/><rect x="2" y="8" width="4" height="1"/><rect x="2" y="8" width="1" height="4"/>
<rect x="8" y="5" width="1" height="1"/><rect x="10" y="5" width="4" height="1"/><rect x="8" y="7" width="2" height="1"/><rect x="11" y="7" width="3" height="1"/>
<rect x="8" y="9" width="4" height="1"/><rect x="13" y="9" width="1" height="1"/><rect x="8" y="11" width="1" height="1"/><rect x="10" y="11" width="3" height="1"/></g>
<rect x="3" y="6" width="2" height="1" fill="#f08c10"/><rect x="3" y="10" width="3" height="1" fill="#f08c10"/>
<rect x="1" y="12" width="14" height="1" fill="#fff"/>
<rect x="1" y="14" width="5" height="1" fill="#fff"/><rect x="8" y="14" width="7" height="1" fill="#fff"/></svg>
<div class="t" style="left:63px;top:145px;font-size:12px;color:#000">property_stack</div>
<div style="left:24px;top:159px;width:9px;height:9px;background:#fff;border:1px solid #C8B850"></div>
<svg style="position:absolute;left:24px;top:159px;" width="9" height="9" viewBox="0 0 9 9"><rect x="2" y="4" width="5" height="1" fill="#000"/><rect x="4" y="2" width="1" height="5" fill="#000"/></svg>
<svg style="position:absolute;left:33px;top:163px;" width="6" height="1" viewBox="0 0 6 1"><rect x="1" y="0" width="1" height="1" fill="#C8B850"/><rect x="3" y="0" width="1" height="1" fill="#C8B850"/><rect x="5" y="0" width="1" height="1" fill="#C8B850"/></svg>
<svg style="position:absolute;left:28px;top:155px;" width="1" height="4" viewBox="0 0 1 4"><rect x="0" y="1" width="1" height="1" fill="#C8B850"/><rect x="0" y="3" width="1" height="1" fill="#C8B850"/></svg>
<svg style="position:absolute;left:28px;top:168px;" width="1" height="4" viewBox="0 0 1 4"><rect x="0" y="1" width="1" height="1" fill="#C8B850"/><rect x="0" y="3" width="1" height="1" fill="#C8B850"/></svg>
<svg style="position:absolute;left:41px;top:157px;overflow:hidden" width="16" height="13" viewBox="0 0 16 13"><rect x="0" y="0" width="16" height="16" fill="#8a8a8a"/><rect x="1" y="0" width="14" height="1" fill="#f4f4f4"/>
<rect x="1" y="2" width="5" height="1" fill="#fff"/><rect x="8" y="2" width="7" height="1" fill="#fff"/>
<rect x="1" y="4" width="14" height="8" fill="#dcdcdc"/>
<g fill="#000"><rect x="2" y="5" width="4" height="1"/><rect x="2" y="5" width="1" height="3"/><rect x="2" y="8" width="4" height="1"/><rect x="2" y="8" width="1" height="4"/>
<rect x="8" y="5" width="1" height="1"/><rect x="10" y="5" width="4" height="1"/><rect x="8" y="7" width="2" height="1"/><rect x="11" y="7" width="3" height="1"/>
<rect x="8" y="9" width="4" height="1"/><rect x="13" y="9" width="1" height="1"/><rect x="8" y="11" width="1" height="1"/><rect x="10" y="11" width="3" height="1"/></g>
<rect x="3" y="6" width="2" height="1" fill="#f08c10"/><rect x="3" y="10" width="3" height="1" fill="#f08c10"/>
<rect x="1" y="12" width="14" height="1" fill="#fff"/>
<rect x="1" y="14" width="5" height="1" fill="#fff"/><rect x="8" y="14" width="7" height="1" fill="#fff"/></svg>
<div class="t" style="left:63px;top:158px;font-size:12px;color:#000">tree</div>
<div class="t" style="left:175px;top:158px;font-size:12px;">cosiStdProjec...</div>
<div style="left:24px;top:172px;width:9px;height:9px;background:#fff;border:1px solid #C8B850"></div>
<svg style="position:absolute;left:24px;top:172px;" width="9" height="9" viewBox="0 0 9 9"><rect x="2" y="4" width="5" height="1" fill="#000"/><rect x="4" y="2" width="1" height="5" fill="#000"/></svg>
<svg style="position:absolute;left:33px;top:176px;" width="6" height="1" viewBox="0 0 6 1"><rect x="1" y="0" width="1" height="1" fill="#C8B850"/><rect x="3" y="0" width="1" height="1" fill="#C8B850"/><rect x="5" y="0" width="1" height="1" fill="#C8B850"/></svg>
<svg style="position:absolute;left:28px;top:168px;" width="1" height="4" viewBox="0 0 1 4"><rect x="0" y="1" width="1" height="1" fill="#C8B850"/><rect x="0" y="3" width="1" height="1" fill="#C8B850"/></svg>
<svg style="position:absolute;left:28px;top:181px;" width="1" height="4" viewBox="0 0 1 4"><rect x="0" y="1" width="1" height="1" fill="#C8B850"/><rect x="0" y="3" width="1" height="1" fill="#C8B850"/></svg>
<svg style="position:absolute;left:41px;top:170px;overflow:hidden" width="16" height="13" viewBox="0 0 16 13"><rect x="0" y="0" width="16" height="16" fill="#8a8a8a"/><rect x="1" y="0" width="14" height="1" fill="#f4f4f4"/>
<rect x="1" y="2" width="5" height="1" fill="#fff"/><rect x="8" y="2" width="7" height="1" fill="#fff"/>
<rect x="1" y="4" width="14" height="8" fill="#dcdcdc"/>
<g fill="#000"><rect x="2" y="5" width="4" height="1"/><rect x="2" y="5" width="1" height="3"/><rect x="2" y="8" width="4" height="1"/><rect x="2" y="8" width="1" height="4"/>
<rect x="8" y="5" width="1" height="1"/><rect x="10" y="5" width="4" height="1"/><rect x="8" y="7" width="2" height="1"/><rect x="11" y="7" width="3" height="1"/>
<rect x="8" y="9" width="4" height="1"/><rect x="13" y="9" width="1" height="1"/><rect x="8" y="11" width="1" height="1"/><rect x="10" y="11" width="3" height="1"/></g>
<rect x="3" y="6" width="2" height="1" fill="#f08c10"/><rect x="3" y="10" width="3" height="1" fill="#f08c10"/>
<rect x="1" y="12" width="14" height="1" fill="#fff"/>
<rect x="1" y="14" width="5" height="1" fill="#fff"/><rect x="8" y="14" width="7" height="1" fill="#fff"/></svg>
<div class="t" style="left:63px;top:171px;font-size:12px;color:#000">tree_common</div>
<div style="left:24px;top:185px;width:9px;height:9px;background:#fff;border:1px solid #C8B850"></div>
<svg style="position:absolute;left:24px;top:185px;" width="9" height="9" viewBox="0 0 9 9"><rect x="2" y="4" width="5" height="1" fill="#000"/><rect x="4" y="2" width="1" height="5" fill="#000"/></svg>
<svg style="position:absolute;left:33px;top:189px;" width="6" height="1" viewBox="0 0 6 1"><rect x="1" y="0" width="1" height="1" fill="#C8B850"/><rect x="3" y="0" width="1" height="1" fill="#C8B850"/><rect x="5" y="0" width="1" height="1" fill="#C8B850"/></svg>
<svg style="position:absolute;left:28px;top:181px;" width="1" height="4" viewBox="0 0 1 4"><rect x="0" y="1" width="1" height="1" fill="#C8B850"/><rect x="0" y="3" width="1" height="1" fill="#C8B850"/></svg>
<svg style="position:absolute;left:28px;top:194px;" width="1" height="4" viewBox="0 0 1 4"><rect x="0" y="1" width="1" height="1" fill="#C8B850"/><rect x="0" y="3" width="1" height="1" fill="#C8B850"/></svg>
<svg style="position:absolute;left:41px;top:183px;overflow:hidden" width="16" height="13" viewBox="0 0 16 13"><rect x="0" y="0" width="16" height="16" fill="#8a8a8a"/><rect x="1" y="0" width="14" height="1" fill="#f4f4f4"/>
<rect x="1" y="2" width="5" height="1" fill="#fff"/><rect x="8" y="2" width="7" height="1" fill="#fff"/>
<rect x="1" y="4" width="14" height="8" fill="#dcdcdc"/>
<g fill="#000"><rect x="2" y="5" width="4" height="1"/><rect x="2" y="5" width="1" height="3"/><rect x="2" y="8" width="4" height="1"/><rect x="2" y="8" width="1" height="4"/>
<rect x="8" y="5" width="1" height="1"/><rect x="10" y="5" width="4" height="1"/><rect x="8" y="7" width="2" height="1"/><rect x="11" y="7" width="3" height="1"/>
<rect x="8" y="9" width="4" height="1"/><rect x="13" y="9" width="1" height="1"/><rect x="8" y="11" width="1" height="1"/><rect x="10" y="11" width="3" height="1"/></g>
<rect x="3" y="6" width="2" height="1" fill="#f08c10"/><rect x="3" y="10" width="3" height="1" fill="#f08c10"/>
<rect x="1" y="12" width="14" height="1" fill="#fff"/>
<rect x="1" y="14" width="5" height="1" fill="#fff"/><rect x="8" y="14" width="7" height="1" fill="#fff"/></svg>
<div class="t" style="left:63px;top:184px;font-size:12px;color:#000">workspace</div>
<div class="t" style="left:1px;top:197px;font-size:12px;">ODC_Option</div>
<div class="t" style="left:1px;top:210px;font-size:12px;">ODC_Options</div>
<div class="t" style="left:1px;top:223px;font-size:12px;">ProgressData</div>
<div class="t" style="left:1px;top:236px;font-size:12px;">REAL</div>
<div class="t" style="left:1px;top:249px;font-size:12px;">STRING</div>
<div class="t" style="left:1px;top:262px;font-size:12px;">SearchWin</div>
<div class="t" style="left:1px;top:275px;font-size:12px;">TIME</div>
<div class="t" style="left:1px;top:288px;font-size:12px;">UINT</div>
<div class="t" style="left:1px;top:301px;font-size:12px;">VOID</div>
<div class="t" style="left:1px;top:314px;font-size:12px;">_TPL_Dialog</div>
<div class="t" style="left:1px;top:327px;font-size:12px;">_TPL_DialogExtended</div>
<div class="t" style="left:1px;top:340px;font-size:12px;">_TPL_ListDialog</div>
<div style="left:4px;top:354px;width:9px;height:9px;background:#fff;border:1px solid #C8B850"></div>
<svg style="position:absolute;left:4px;top:354px;" width="9" height="9" viewBox="0 0 9 9"><rect x="2" y="4" width="5" height="1" fill="#000"/><rect x="4" y="2" width="1" height="5" fill="#000"/></svg>
<svg style="position:absolute;left:13px;top:358px;" width="6" height="1" viewBox="0 0 6 1"><rect x="1" y="0" width="1" height="1" fill="#C8B850"/><rect x="3" y="0" width="1" height="1" fill="#C8B850"/><rect x="5" y="0" width="1" height="1" fill="#C8B850"/></svg>
<svg style="position:absolute;left:8px;top:350px;" width="1" height="4" viewBox="0 0 1 4"><rect x="0" y="1" width="1" height="1" fill="#C8B850"/><rect x="0" y="3" width="1" height="1" fill="#C8B850"/></svg>
<svg style="position:absolute;left:8px;top:363px;" width="1" height="4" viewBox="0 0 1 4"><rect x="0" y="1" width="1" height="1" fill="#C8B850"/><rect x="0" y="3" width="1" height="1" fill="#C8B850"/></svg>
<svg style="position:absolute;left:21px;top:352px;overflow:hidden" width="16" height="13" viewBox="0 0 16 13"><rect x="0" y="0" width="16" height="16" fill="#8a8a8a"/><rect x="1" y="0" width="14" height="1" fill="#f4f4f4"/>
<rect x="1" y="2" width="5" height="1" fill="#fff"/><rect x="8" y="2" width="7" height="1" fill="#fff"/>
<rect x="1" y="4" width="14" height="8" fill="#dcdcdc"/>
<g fill="#000"><rect x="2" y="5" width="4" height="1"/><rect x="2" y="5" width="1" height="3"/><rect x="2" y="8" width="4" height="1"/><rect x="2" y="8" width="1" height="4"/>
<rect x="8" y="5" width="1" height="1"/><rect x="10" y="5" width="4" height="1"/><rect x="8" y="7" width="2" height="1"/><rect x="11" y="7" width="3" height="1"/>
<rect x="8" y="9" width="4" height="1"/><rect x="13" y="9" width="1" height="1"/><rect x="8" y="11" width="1" height="1"/><rect x="10" y="11" width="3" height="1"/></g>
<rect x="3" y="6" width="2" height="1" fill="#f08c10"/><rect x="3" y="10" width="3" height="1" fill="#f08c10"/>
<rect x="1" y="12" width="14" height="1" fill="#fff"/>
<rect x="1" y="14" width="5" height="1" fill="#fff"/><rect x="8" y="14" width="7" height="1" fill="#fff"/><rect x="1" y="0" width="9" height="1" fill="#f08c10"/></svg>
<div class="t" style="left:43px;top:353px;font-size:12px;color:#800080;font-weight:bold;letter-spacing:-0.3px">Windows</div>
<div style="left:4px;top:367px;width:9px;height:9px;background:#fff;border:1px solid #C8B850"></div>
<svg style="position:absolute;left:4px;top:367px;" width="9" height="9" viewBox="0 0 9 9"><rect x="2" y="4" width="5" height="1" fill="#000"/></svg>
<svg style="position:absolute;left:13px;top:371px;" width="6" height="1" viewBox="0 0 6 1"><rect x="1" y="0" width="1" height="1" fill="#C8B850"/><rect x="3" y="0" width="1" height="1" fill="#C8B850"/><rect x="5" y="0" width="1" height="1" fill="#C8B850"/></svg>
<svg style="position:absolute;left:8px;top:363px;" width="1" height="4" viewBox="0 0 1 4"><rect x="0" y="1" width="1" height="1" fill="#C8B850"/><rect x="0" y="3" width="1" height="1" fill="#C8B850"/></svg>
<svg style="position:absolute;left:8px;top:376px;" width="1" height="4" viewBox="0 0 1 4"><rect x="0" y="1" width="1" height="1" fill="#C8B850"/><rect x="0" y="3" width="1" height="1" fill="#C8B850"/></svg>
<svg style="position:absolute;left:21px;top:365px;overflow:hidden" width="16" height="13" viewBox="0 0 16 13"><rect x="0" y="0" width="16" height="16" fill="#8a8a8a"/><rect x="1" y="0" width="14" height="1" fill="#f4f4f4"/>
<rect x="1" y="2" width="5" height="1" fill="#fff"/><rect x="8" y="2" width="7" height="1" fill="#fff"/>
<rect x="1" y="4" width="14" height="8" fill="#dcdcdc"/>
<g fill="#000"><rect x="2" y="5" width="4" height="1"/><rect x="2" y="5" width="1" height="3"/><rect x="2" y="8" width="4" height="1"/><rect x="2" y="8" width="1" height="4"/>
<rect x="8" y="5" width="1" height="1"/><rect x="10" y="5" width="4" height="1"/><rect x="8" y="7" width="2" height="1"/><rect x="11" y="7" width="3" height="1"/>
<rect x="8" y="9" width="4" height="1"/><rect x="13" y="9" width="1" height="1"/><rect x="8" y="11" width="1" height="1"/><rect x="10" y="11" width="3" height="1"/></g>
<rect x="3" y="6" width="2" height="1" fill="#f08c10"/><rect x="3" y="10" width="3" height="1" fill="#f08c10"/>
<rect x="1" y="12" width="14" height="1" fill="#fff"/>
<rect x="1" y="14" width="5" height="1" fill="#fff"/><rect x="8" y="14" width="7" height="1" fill="#fff"/></svg>
<div class="t" style="left:43px;top:366px;font-size:12px;color:#800080;font-weight:bold;letter-spacing:-0.3px">Controls</div>
<div style="left:24px;top:380px;width:9px;height:9px;background:#fff;border:1px solid #C8B850"></div>
<svg style="position:absolute;left:24px;top:380px;" width="9" height="9" viewBox="0 0 9 9"><rect x="2" y="4" width="5" height="1" fill="#000"/><rect x="4" y="2" width="1" height="5" fill="#000"/></svg>
<svg style="position:absolute;left:33px;top:384px;" width="6" height="1" viewBox="0 0 6 1"><rect x="1" y="0" width="1" height="1" fill="#C8B850"/><rect x="3" y="0" width="1" height="1" fill="#C8B850"/><rect x="5" y="0" width="1" height="1" fill="#C8B850"/></svg>
<svg style="position:absolute;left:28px;top:376px;" width="1" height="4" viewBox="0 0 1 4"><rect x="0" y="1" width="1" height="1" fill="#C8B850"/><rect x="0" y="3" width="1" height="1" fill="#C8B850"/></svg>
<svg style="position:absolute;left:28px;top:389px;" width="1" height="4" viewBox="0 0 1 4"><rect x="0" y="1" width="1" height="1" fill="#C8B850"/><rect x="0" y="3" width="1" height="1" fill="#C8B850"/></svg>
<svg style="position:absolute;left:41px;top:378px;overflow:hidden" width="16" height="13" viewBox="0 0 16 13"><rect x="0" y="0" width="16" height="16" fill="#8a8a8a"/><rect x="1" y="0" width="14" height="1" fill="#f4f4f4"/>
<rect x="1" y="2" width="5" height="1" fill="#fff"/><rect x="8" y="2" width="7" height="1" fill="#fff"/>
<rect x="1" y="4" width="14" height="8" fill="#dcdcdc"/>
<g fill="#000"><rect x="2" y="5" width="4" height="1"/><rect x="2" y="5" width="1" height="3"/><rect x="2" y="8" width="4" height="1"/><rect x="2" y="8" width="1" height="4"/>
<rect x="8" y="5" width="1" height="1"/><rect x="10" y="5" width="4" height="1"/><rect x="8" y="7" width="2" height="1"/><rect x="11" y="7" width="3" height="1"/>
<rect x="8" y="9" width="4" height="1"/><rect x="13" y="9" width="1" height="1"/><rect x="8" y="11" width="1" height="1"/><rect x="10" y="11" width="3" height="1"/></g>
<rect x="3" y="6" width="2" height="1" fill="#f08c10"/><rect x="3" y="10" width="3" height="1" fill="#f08c10"/>
<rect x="1" y="12" width="14" height="1" fill="#fff"/>
<rect x="1" y="14" width="5" height="1" fill="#fff"/><rect x="8" y="14" width="7" height="1" fill="#fff"/></svg>
<div class="t" style="left:63px;top:379px;font-size:12px;color:#000">edit</div>
<div style="left:24px;top:393px;width:9px;height:9px;background:#fff;border:1px solid #C8B850"></div>
<svg style="position:absolute;left:24px;top:393px;" width="9" height="9" viewBox="0 0 9 9"><rect x="2" y="4" width="5" height="1" fill="#000"/><rect x="4" y="2" width="1" height="5" fill="#000"/></svg>
<svg style="position:absolute;left:33px;top:397px;" width="6" height="1" viewBox="0 0 6 1"><rect x="1" y="0" width="1" height="1" fill="#C8B850"/><rect x="3" y="0" width="1" height="1" fill="#C8B850"/><rect x="5" y="0" width="1" height="1" fill="#C8B850"/></svg>
<svg style="position:absolute;left:28px;top:389px;" width="1" height="4" viewBox="0 0 1 4"><rect x="0" y="1" width="1" height="1" fill="#C8B850"/><rect x="0" y="3" width="1" height="1" fill="#C8B850"/></svg>
<svg style="position:absolute;left:28px;top:402px;" width="1" height="4" viewBox="0 0 1 4"><rect x="0" y="1" width="1" height="1" fill="#C8B850"/><rect x="0" y="3" width="1" height="1" fill="#C8B850"/></svg>
<svg style="position:absolute;left:41px;top:391px;overflow:hidden" width="16" height="13" viewBox="0 0 16 13"><rect x="0" y="0" width="16" height="16" fill="#8a8a8a"/><rect x="1" y="0" width="14" height="1" fill="#f4f4f4"/>
<rect x="1" y="2" width="5" height="1" fill="#fff"/><rect x="8" y="2" width="7" height="1" fill="#fff"/>
<rect x="1" y="4" width="14" height="8" fill="#dcdcdc"/>
<g fill="#000"><rect x="2" y="5" width="4" height="1"/><rect x="2" y="5" width="1" height="3"/><rect x="2" y="8" width="4" height="1"/><rect x="2" y="8" width="1" height="4"/>
<rect x="8" y="5" width="1" height="1"/><rect x="10" y="5" width="4" height="1"/><rect x="8" y="7" width="2" height="1"/><rect x="11" y="7" width="3" height="1"/>
<rect x="8" y="9" width="4" height="1"/><rect x="13" y="9" width="1" height="1"/><rect x="8" y="11" width="1" height="1"/><rect x="10" y="11" width="3" height="1"/></g>
<rect x="3" y="6" width="2" height="1" fill="#f08c10"/><rect x="3" y="10" width="3" height="1" fill="#f08c10"/>
<rect x="1" y="12" width="14" height="1" fill="#fff"/>
<rect x="1" y="14" width="5" height="1" fill="#fff"/><rect x="8" y="14" width="7" height="1" fill="#fff"/></svg>
<div class="t" style="left:63px;top:392px;font-size:12px;color:#000">list</div>
<div style="left:24px;top:406px;width:9px;height:9px;background:#fff;border:1px solid #C8B850"></div>
<svg style="position:absolute;left:24px;top:406px;" width="9" height="9" viewBox="0 0 9 9"><rect x="2" y="4" width="5" height="1" fill="#000"/><rect x="4" y="2" width="1" height="5" fill="#000"/></svg>
<svg style="position:absolute;left:33px;top:410px;" width="6" height="1" viewBox="0 0 6 1"><rect x="1" y="0" width="1" height="1" fill="#C8B850"/><rect x="3" y="0" width="1" height="1" fill="#C8B850"/><rect x="5" y="0" width="1" height="1" fill="#C8B850"/></svg>
<svg style="position:absolute;left:28px;top:402px;" width="1" height="4" viewBox="0 0 1 4"><rect x="0" y="1" width="1" height="1" fill="#C8B850"/><rect x="0" y="3" width="1" height="1" fill="#C8B850"/></svg>
<svg style="position:absolute;left:28px;top:415px;" width="1" height="4" viewBox="0 0 1 4"><rect x="0" y="1" width="1" height="1" fill="#C8B850"/><rect x="0" y="3" width="1" height="1" fill="#C8B850"/></svg>
<svg style="position:absolute;left:41px;top:404px;overflow:hidden" width="16" height="13" viewBox="0 0 16 13"><rect x="0" y="0" width="16" height="16" fill="#8a8a8a"/><rect x="1" y="0" width="14" height="1" fill="#f4f4f4"/>
<rect x="1" y="2" width="5" height="1" fill="#fff"/><rect x="8" y="2" width="7" height="1" fill="#fff"/>
<rect x="1" y="4" width="14" height="8" fill="#dcdcdc"/>
<g fill="#000"><rect x="2" y="5" width="4" height="1"/><rect x="2" y="5" width="1" height="3"/><rect x="2" y="8" width="4" height="1"/><rect x="2" y="8" width="1" height="4"/>
<rect x="8" y="5" width="1" height="1"/><rect x="10" y="5" width="4" height="1"/><rect x="8" y="7" width="2" height="1"/><rect x="11" y="7" width="3" height="1"/>
<rect x="8" y="9" width="4" height="1"/><rect x="13" y="9" width="1" height="1"/><rect x="8" y="11" width="1" height="1"/><rect x="10" y="11" width="3" height="1"/></g>
<rect x="3" y="6" width="2" height="1" fill="#f08c10"/><rect x="3" y="10" width="3" height="1" fill="#f08c10"/>
<rect x="1" y="12" width="14" height="1" fill="#fff"/>
<rect x="1" y="14" width="5" height="1" fill="#fff"/><rect x="8" y="14" width="7" height="1" fill="#fff"/></svg>
<div class="t" style="left:63px;top:405px;font-size:12px;color:#000">list_edit</div>
<div style="left:38px;top:418px;width:214px;height:12px;background:#008080"></div>
<div style="left:172px;top:418px;width:79px;height:12px;border:1px dotted #e8a0a0"></div>
<div style="left:24px;top:419px;width:9px;height:9px;background:#fff;border:1px solid #C8B850"></div>
<svg style="position:absolute;left:24px;top:419px;" width="9" height="9" viewBox="0 0 9 9"><rect x="2" y="4" width="5" height="1" fill="#000"/><rect x="4" y="2" width="1" height="5" fill="#000"/></svg>
<svg style="position:absolute;left:33px;top:423px;" width="6" height="1" viewBox="0 0 6 1"><rect x="1" y="0" width="1" height="1" fill="#C8B850"/><rect x="3" y="0" width="1" height="1" fill="#C8B850"/><rect x="5" y="0" width="1" height="1" fill="#C8B850"/></svg>
<svg style="position:absolute;left:28px;top:415px;" width="1" height="4" viewBox="0 0 1 4"><rect x="0" y="1" width="1" height="1" fill="#C8B850"/><rect x="0" y="3" width="1" height="1" fill="#C8B850"/></svg>
<svg style="position:absolute;left:28px;top:428px;" width="1" height="4" viewBox="0 0 1 4"><rect x="0" y="1" width="1" height="1" fill="#C8B850"/><rect x="0" y="3" width="1" height="1" fill="#C8B850"/></svg>
<svg style="position:absolute;left:41px;top:417px;overflow:hidden" width="16" height="13" viewBox="0 0 16 13"><rect x="0" y="0" width="16" height="16" fill="#8a8a8a"/><rect x="1" y="0" width="14" height="1" fill="#f4f4f4"/>
<rect x="1" y="2" width="5" height="1" fill="#fff"/><rect x="8" y="2" width="7" height="1" fill="#fff"/>
<rect x="1" y="4" width="14" height="8" fill="#dcdcdc"/>
<g fill="#000"><rect x="2" y="5" width="4" height="1"/><rect x="2" y="5" width="1" height="3"/><rect x="2" y="8" width="4" height="1"/><rect x="2" y="8" width="1" height="4"/>
<rect x="8" y="5" width="1" height="1"/><rect x="10" y="5" width="4" height="1"/><rect x="8" y="7" width="2" height="1"/><rect x="11" y="7" width="3" height="1"/>
<rect x="8" y="9" width="4" height="1"/><rect x="13" y="9" width="1" height="1"/><rect x="8" y="11" width="1" height="1"/><rect x="10" y="11" width="3" height="1"/></g>
<rect x="3" y="6" width="2" height="1" fill="#f08c10"/><rect x="3" y="10" width="3" height="1" fill="#f08c10"/>
<rect x="1" y="12" width="14" height="1" fill="#fff"/>
<rect x="1" y="14" width="5" height="1" fill="#fff"/><rect x="8" y="14" width="7" height="1" fill="#fff"/><rect x="0" y="0" width="16" height="16" fill="#008080" opacity="0.45"/></svg>
<div class="t" style="left:63px;top:418px;font-size:12px;color:#fff">list_edit_frame</div>
<div class="t" style="left:1px;top:431px;font-size:12px;">_TPL_TreeProject</div>
<div class="t" style="left:1px;top:444px;font-size:12px;">_TPL_VirtualListDialog</div>
<div class="t" style="left:1px;top:457px;font-size:12px;">_TPL_VirtualTab</div>
<div class="t" style="left:1px;top:470px;font-size:12px;">_TPL_VirtualTreeDialog</div>
<div class="t" style="left:1px;top:483px;font-size:12px;">_TPL_Wizard</div>
</div>
<div class="t" style="left:11px;top:665px;font-size:12px;font-weight:bold;letter-spacing:-0.2px">Design resource</div>
<div style="left:299px;top:79px;width:1px;height:604px;background:#C8B850"></div>
<div style="left:300px;top:79px;width:1px;height:604px;background:#000000"></div>
<div style="left:302px;top:79px;width:1px;height:604px;background:#F8F4D6"></div>
<div style="left:305px;top:79px;width:336px;height:324px;border:2px solid #000000"></div>
<div style="left:307px;top:81px;width:332px;height:1px;background:#F8F4D6"></div>
<div style="left:307px;top:81px;width:1px;height:320px;background:#F8F4D6"></div>
<div style="left:311px;top:85px;width:150px;height:20px;background:#E5E0B5;border-top:1px solid #F8F4D6;border-left:1px solid #F8F4D6"></div>
<div style="left:311px;top:104px;width:150px;height:1px;background:#C8B850"></div>
<div style="left:460px;top:85px;width:1px;height:20px;background:#F8F4D6"></div>
<svg style="position:absolute;left:315px;top:89px;" width="11" height="11" viewBox="0 0 11 11"><circle cx="3" cy="3" r="2.3" fill="#e08a30"/><circle cx="2.5" cy="8.5" r="2.2" fill="#2030d0"/><circle cx="8.5" cy="8.5" r="2.2" fill="#40c040"/></svg>
<svg style="position:absolute;left:333px;top:89px;" width="11" height="11" viewBox="0 0 11 11"><circle cx="7" cy="3" r="2.6" fill="#e08a30"/><circle cx="2.5" cy="8.5" r="2.2" fill="#2030d0"/><circle cx="6.5" cy="8.5" r="2.2" fill="#40c040"/></svg>
<svg style="position:absolute;left:350px;top:89px;" width="11" height="11" viewBox="0 0 11 11"><circle cx="3" cy="3" r="2.5" fill="#2030d0"/><circle cx="7.5" cy="7.5" r="2.8" fill="#f0a020"/></svg>
<div style="left:367px;top:88px;width:1px;height:14px;background:#C8B850"></div>
<div style="left:368px;top:88px;width:1px;height:14px;background:#F8F4D6"></div>
<svg style="position:absolute;left:373px;top:88px;" width="11" height="13" viewBox="0 0 11 13"><path d="M5.5 1 L10 6 H7.5 V12 H3.5 V6 H1 Z" fill="#f0a030" stroke="#b06010" stroke-width="0.8"/></svg>
<svg style="position:absolute;left:390px;top:88px;" width="11" height="13" viewBox="0 0 11 13"><path d="M5.5 12 L10 7 H7.5 V1 H3.5 V7 H1 Z" fill="#f0a030" stroke="#b06010" stroke-width="0.8"/></svg>
<svg style="position:absolute;left:406px;top:89px;" width="12" height="12" viewBox="0 0 12 12"><path d="M2 2 L10 10 M10 2 L2 10" stroke="#a03000" stroke-width="3.4"/><path d="M2 2 L10 10 M10 2 L2 10" stroke="#f86818" stroke-width="2"/></svg>
<svg style="position:absolute;left:423px;top:89px;" width="12" height="12" viewBox="0 0 12 12"><path d="M2 2 L10 10 M10 2 L2 10" stroke="#a03000" stroke-width="3.4"/><path d="M2 2 L10 10 M10 2 L2 10" stroke="#f86818" stroke-width="2"/></svg>
<div style="left:416px;top:83px;width:1px;height:22px;background:#000000"></div>
<div style="left:311px;top:105px;width:150px;height:245px;background:#fff;border-left:1px solid #C8B850"></div>
<div style="left:465px;top:90px;width:1px;height:257px;background:#a09c88"></div>
<div style="left:468px;top:90px;width:1px;height:257px;background:#a09c88"></div>
<div style="left:473px;top:85px;width:158px;height:265px;border-left:2px solid #C8B850;border-top:2px solid #C8B850"></div>
<div style="left:473px;top:349px;width:158px;height:1px;background:#F8F4D6"></div>
<div style="left:527px;top:82px;width:1px;height:8px;background:#000000"></div>
<div style="left:309px;top:361px;width:324px;height:1px;background:#000000"></div>
<div style="left:416px;top:351px;width:1px;height:44px;background:#000000"></div>
<div style="left:527px;top:347px;width:1px;height:48px;background:#000000"></div>
<div style="left:533px;top:367px;width:98px;height:24px;background:#E5E0B5;box-shadow: inset 1px 1px 0 #F8F4D6, inset -1px -1px 0 #000000, inset -2px -2px 0 #C8B850"></div>
<svg style="position:absolute;left:557px;top:370px;" width="19" height="18" viewBox="0 0 19 18"><path d="M3 11 L5.5 15.5 L16 3.5" fill="none" stroke="#f8a040" stroke-width="5" stroke-linejoin="round" stroke-linecap="round" opacity="0.7"/><path d="M3 11 L5.5 15.5 L16 3.5" fill="none" stroke="#000" stroke-width="3.4" stroke-linejoin="round"/><path d="M3.3 11 L5.5 14.5 L15.5 4" fill="none" stroke="#fff" stroke-width="1.8" stroke-linejoin="round"/><path d="M13 5 L16.5 3 L15 6 Z" fill="#fff"/></svg>
<div class="t" style="left:578px;top:373px;font-size:12px;letter-spacing:-0.9px">Finish</div>
<div style="left:303px;top:642px;width:598px;height:1px;background:#C8B850"></div>
<div style="left:303px;top:643px;width:598px;height:1px;background:#000000"></div>
<div style="left:303px;top:644px;width:598px;height:1px;background:#F8F4D6"></div>
<svg style="position:absolute;left:400px;top:640px;" width="360" height="18" viewBox="0 0 360 18"><path d="M9 4 H51.0 L48.5 12 Q47.5 15 44.5 15 H9 Z" fill="#fff"/><path d="M9 15.5 H44.5 M51.0 3.5 L48.5 12 Q47.5 15.5 44.5 15.5 M54.0 3.5 L56.5 12 Q57.5 15.5 60.5 15.5 H194.5 M201.0 3.5 L198.5 12 Q197.5 15.5 194.5 15.5 M204.0 3.5 L206.5 12 Q207.5 15.5 210.5 15.5 H343 Q346 15.5 347 12 L350 3.5" fill="none" stroke="#000" stroke-width="1"/></svg>
<div class="t" style="left:504px;top:643px;font-size:12px;letter-spacing:-0.6px">Properties</div>
<div class="t" style="left:638px;top:643px;font-size:12px;letter-spacing:-0.6px">Context classes</div>
<div style="left:715px;top:90px;width:1px;height:550px;background:#a09c88"></div>
<div style="left:718px;top:90px;width:1px;height:550px;background:#a09c88"></div>
<div style="left:719px;top:79px;width:2px;height:562px;background:#C8B850"></div>
<div style="left:719px;top:79px;width:186px;height:1px;background:#C8B850"></div>
<div style="left:721px;top:81px;width:178px;height:20px;background:#E5E0B5;box-shadow: inset 1px 1px 0 #F8F4D6, inset -1px -1px 0 #000000"></div>
<svg style="position:absolute;left:745px;top:83px;" width="16" height="16" viewBox="0 0 16 16"><path d="M1 6 H6 L7 5 H12 V15 H1 Z" fill="#f0b080" stroke="#c07040" stroke-width="0.8"/><rect x="2" y="9" width="9" height="5" fill="#f8d8b0"/><path d="M6 12 L13 3 L15 5 L8 13 Z" fill="#f0c040" stroke="#604000" stroke-width="0.7"/><path d="M13 3 L14 1 L16 3 L15 5 Z" fill="#e03040"/><rect x="5" y="11" width="3" height="3" fill="#202020"/></svg>
<div class="t" style="left:763px;top:85px;font-size:12px;letter-spacing:-0.5px">Field control properties</div>
<div style="left:721px;top:101px;width:178px;height:1px;background:#F8F4D6"></div>
<svg style="position:absolute;left:721px;top:104px;" width="178" height="17" viewBox="0 0 178 17"><path d="M0.5 14 L4 4 Q6 1.5 10 1.5 H55 Q59 1.5 60 4 L62 14" fill="none" stroke="#000"/>
<path d="M63 15.5 L67 4 Q69 1 73 1 H108 Q112 1 114 4 L118 15.5 Z" fill="#fff" stroke="#000"/>
<path d="M120 14 L124 4 Q126 2 130 2 H157 Q161 2 163 4 L167 14" fill="none" stroke="#000"/></svg>
<div class="t" style="left:732px;top:108px;font-size:12px;letter-spacing:-0.55px">Settings</div>
<div class="t" style="left:795px;top:108px;font-size:12px;letter-spacing:-0.35px">Layout</div>
<div class="t" style="left:852px;top:108px;font-size:12px;">Label</div>
<div style="left:721px;top:118px;width:178px;height:1px;background:#F8F4D6"></div>
<div style="left:721px;top:120px;width:178px;height:251px;background:#fff;border:1px solid #000000;border-right:1px solid #000000"></div>
<div style="left:722px;top:121px;width:70px;height:249px;background:#E5E0B5"></div>
<div style="left:722px;top:121px;width:70px;height:21px;background:#E5E0B5;box-shadow: inset 1px 1px 0 #F8F4D6, inset -1px -1px 0 #000000"></div>
<div style="left:792px;top:121px;width:106px;height:21px;background:#E5E0B5"></div>
<div style="left:792px;top:141px;width:106px;height:1px;background:#a8a488"></div>
<div class="t" style="left:726px;top:127px;font-size:12px;">Width</div>
<div class="t" style="left:795px;top:126px;font-size:12px;">300</div>
<div style="left:722px;top:142px;width:70px;height:20px;background:#E5E0B5;box-shadow: inset 1px 1px 0 #F8F4D6, inset -1px -1px 0 #000000"></div>
<div style="left:792px;top:161px;width:106px;height:1px;background:#a8a488"></div>
<div class="t" style="left:726px;top:147px;font-size:12px;">Height</div>
<div class="t" style="left:795px;top:146px;font-size:12px;">300</div>
<div style="left:722px;top:162px;width:70px;height:20px;background:#E5E0B5;box-shadow: inset 1px 1px 0 #F8F4D6, inset -1px -1px 0 #000000"></div>
<div style="left:792px;top:181px;width:106px;height:1px;background:#a8a488"></div>
<div class="t" style="left:726px;top:167px;font-size:12px;">Hor. cells</div>
<div class="t" style="left:795px;top:166px;font-size:12px;">3</div>
<div style="left:722px;top:182px;width:70px;height:20px;background:#E5E0B5;box-shadow: inset 1px 1px 0 #F8F4D6, inset -1px -1px 0 #000000"></div>
<div style="left:792px;top:201px;width:106px;height:1px;background:#a8a488"></div>
<div class="t" style="left:726px;top:187px;font-size:12px;">Vert. cells</div>
<div class="t" style="left:795px;top:186px;font-size:12px;">2</div>
<div style="left:722px;top:202px;width:70px;height:20px;background:#E5E0B5;box-shadow: inset 1px 1px 0 #F8F4D6, inset -1px -1px 0 #000000"></div>
<div style="left:792px;top:221px;width:106px;height:1px;background:#a8a488"></div>
<div class="t" style="left:726px;top:207px;font-size:12px;">Inner dist.</div>
<div class="t" style="left:795px;top:206px;font-size:12px;">2</div>
<div style="left:722px;top:222px;width:70px;height:20px;background:#E5E0B5;box-shadow: inset 1px 1px 0 #F8F4D6, inset -1px -1px 0 #000000"></div>
<div style="left:792px;top:241px;width:106px;height:1px;background:#a8a488"></div>
<div class="t" style="left:726px;top:227px;font-size:12px;">Margin top</div>
<div class="t" style="left:795px;top:226px;font-size:12px;">0</div>
<div style="left:722px;top:242px;width:70px;height:20px;background:#E5E0B5;box-shadow: inset 1px 1px 0 #F8F4D6, inset -1px -1px 0 #000000"></div>
<div style="left:792px;top:261px;width:106px;height:1px;background:#a8a488"></div>
<div class="t" style="left:726px;top:247px;font-size:12px;">Margin left</div>
<div class="t" style="left:795px;top:246px;font-size:12px;">0</div>
<div style="left:722px;top:262px;width:70px;height:20px;background:#E5E0B5;box-shadow: inset 1px 1px 0 #F8F4D6, inset -1px -1px 0 #000000"></div>
<div style="left:792px;top:281px;width:106px;height:1px;background:#a8a488"></div>
<div class="t" style="left:726px;top:267px;font-size:12px;">Margin bottor</div>
<div class="t" style="left:795px;top:266px;font-size:12px;">0</div>
<div style="left:722px;top:282px;width:70px;height:20px;background:#E5E0B5;box-shadow: inset 1px 1px 0 #F8F4D6, inset -1px -1px 0 #000000"></div>
<div style="left:792px;top:301px;width:106px;height:1px;background:#a8a488"></div>
<div class="t" style="left:726px;top:287px;font-size:12px;">Margin right</div>
<div class="t" style="left:795px;top:286px;font-size:12px;">0</div>
<div style="left:721px;top:375px;width:178px;height:20px;background:#E5E0B5;box-shadow: inset 1px 1px 0 #F8F4D6, inset -1px -1px 0 #000000"></div>
<svg style="position:absolute;left:790px;top:378px;" width="16" height="15" viewBox="0 0 16 15"><rect x="1" y="7" width="12" height="6" fill="#d0d0d0" stroke="#505050" stroke-width="0.8"/><rect x="2" y="8" width="10" height="3" fill="#fff"/><rect x="3" y="9" width="3" height="1" fill="#f08000"/><path d="M6 10 L12 2 L14 4 L8 11 Z" fill="#f0c040" stroke="#604000" stroke-width="0.6"/><path d="M12 2 L13 0.5 L15 2.5 L14 4 Z" fill="#e03040"/></svg>
<div class="t" style="left:810px;top:379px;font-size:12px;">Edi<u>t</u></div>
<div style="left:721px;top:397px;width:178px;height:243px;background:#fff;border:1px solid #000000"></div>
<div style="left:722px;top:398px;width:70px;height:241px;background:#E5E0B5"></div>
<div style="left:722px;top:398px;width:70px;height:23px;background:#E5E0B5;box-shadow: inset 1px 1px 0 #F8F4D6, inset -1px -1px 0 #000000"></div>
<div style="left:792px;top:398px;width:106px;height:23px;background:#E5E0B5"></div>
<div style="left:792px;top:420px;width:106px;height:1px;background:#a8a488"></div>
<div class="t" style="left:726px;top:404px;font-size:12px;">Name</div>
<div class="t" style="left:795px;top:404px;font-size:12px;">_noborder</div>
<div style="left:722px;top:421px;width:70px;height:22px;background:#E5E0B5;box-shadow: inset 1px 1px 0 #F8F4D6, inset -1px -1px 0 #000000"></div>
<div style="left:792px;top:442px;width:106px;height:1px;background:#a8a488"></div>
<div class="t" style="left:726px;top:426px;font-size:12px;">Transparent</div>
<div style="left:799px;top:426px;width:12px;height:12px;background:#fff;border:1px solid #000"></div>
<div style="left:722px;top:443px;width:70px;height:22px;background:#E5E0B5;box-shadow: inset 1px 1px 0 #F8F4D6, inset -1px -1px 0 #000000"></div>
<div style="left:792px;top:464px;width:106px;height:1px;background:#a8a488"></div>
<div class="t" style="left:726px;top:448px;font-size:12px;">Border</div>
<div style="left:799px;top:448px;width:12px;height:12px;background:#fff;border:1px solid #000"></div>
<div style="left:722px;top:465px;width:70px;height:22px;background:#E5E0B5;box-shadow: inset 1px 1px 0 #F8F4D6, inset -1px -1px 0 #000000"></div>
<div style="left:792px;top:486px;width:106px;height:1px;background:#a8a488"></div>
<div class="t" style="left:726px;top:470px;font-size:12px;">Border style</div>
<div style="left:722px;top:487px;width:70px;height:22px;background:#E5E0B5;box-shadow: inset 1px 1px 0 #F8F4D6, inset -1px -1px 0 #000000"></div>
<div style="left:792px;top:508px;width:106px;height:1px;background:#a8a488"></div>
<div class="t" style="left:726px;top:492px;font-size:12px;">Shadow stye</div>
<div class="t" style="left:795px;top:492px;font-size:12px;">BSS_undefined</div>
<div style="left:722px;top:509px;width:70px;height:22px;background:#E5E0B5;box-shadow: inset 1px 1px 0 #F8F4D6, inset -1px -1px 0 #000000"></div>
<div style="left:792px;top:530px;width:106px;height:1px;background:#a8a488"></div>
<div class="t" style="left:726px;top:514px;font-size:12px;">Line width</div>
<div class="t" style="left:795px;top:514px;font-size:12px;">0</div>
<div style="left:722px;top:531px;width:70px;height:22px;background:#E5E0B5;box-shadow: inset 1px 1px 0 #F8F4D6, inset -1px -1px 0 #000000"></div>
<div style="left:792px;top:552px;width:106px;height:1px;background:#a8a488"></div>
<div class="t" style="left:726px;top:536px;font-size:12px;">Line strength</div>
<div class="t" style="left:795px;top:536px;font-size:12px;">0</div>
<svg style="position:absolute;left:892px;top:668px;" width="14" height="14" viewBox="0 0 14 14"><path d="M13 1 L1 13 M13 5 L5 13 M13 9 L9 13" stroke="#F8F4D6" stroke-width="1"/><path d="M13 2.5 L2.5 13 M13 6.5 L6.5 13 M13 10.5 L10.5 13" stroke="#C8B850" stroke-width="1.6"/></svg>
<div style="left:409px;top:572px;width:5px;height:120px;background:linear-gradient(to right, rgba(40,30,0,0.45), rgba(40,30,0,0))"></div>
<div style="left:259px;top:567px;width:150px;height:130px;background:#E5E0B5;border-left:1px solid #F8F4D6;border-top:1px solid #F8F4D6;border-right:1px solid #000000;box-shadow:inset -1px 0 0 #C8B850"></div>
<div style="left:262px;top:570px;width:20px;height:21px;background:#E5E0B5;box-shadow: inset 1px 1px 0 #F8F4D6, inset -1px -1px 0 #C8B850"></div>
<div style="left:282px;top:570px;width:123px;height:21px;background:#008080"></div>
<svg style="position:absolute;left:263px;top:570px;" width="20" height="20" viewBox="0 0 20 20"><path d="M3.5 2.5 V19 M0.5 14.5 H18" stroke="#686050" stroke-width="1"/><path d="M4.5 6 Q6 11 8.5 11.5 Q12 10 13 12" fill="none" stroke="#f07828" stroke-width="1.3"/><path d="M12.5 10.5 Q15.5 16 5.5 19 Q10 19.5 13 17.5 Q15.5 14.5 12.5 10.5 Z" fill="#c85810"/><path d="M9 8.5 L14.5 3.5 L16 5 L10.5 10 Z" fill="#b89840" stroke="#504020" stroke-width="0.6"/><path d="M14.5 3.5 L15.5 2 L17.5 3.5 L16 5 Z" fill="#d06080"/></svg>
<div class="t" style="left:287px;top:575px;font-size:12px;color:#fff">Design</div>
<svg style="position:absolute;left:263px;top:594px;" width="18" height="17" viewBox="0 0 18 17"><rect x="1" y="9" width="14" height="7" fill="#c8c8c8" stroke="#606060" stroke-width="0.8"/><rect x="2" y="10" width="12" height="3" fill="#fff"/><rect x="3" y="11" width="4" height="1" fill="#f08000"/><path d="M7 12 L14 3 L16 5 L9 13 Z" fill="#f0c040" stroke="#604000" stroke-width="0.6"/><path d="M14 3 L15 1.5 L17 3.5 L16 5 Z" fill="#e03040"/></svg>
<div class="t" style="left:287px;top:596px;font-size:12px;">Edit</div>
<div class="t" style="left:362px;top:596px;font-size:12px;">F4</div>
<svg style="position:absolute;left:262px;top:613px;" width="19" height="19" viewBox="0 0 19 19"><g transform="rotate(40 7.5 6)"><rect x="1.5" y="3" width="12" height="6" rx="3" fill="#d88028" stroke="#502800" stroke-width="0.9"/><ellipse cx="11.5" cy="6" rx="2.2" ry="3" fill="#f8b868"/></g><circle cx="5" cy="14.5" r="3" fill="#1828d8" stroke="#101050" stroke-width="0.6"/><circle cx="15" cy="14.5" r="3" fill="#38c030" stroke="#105010" stroke-width="0.6"/><circle cx="4.2" cy="13.6" r="0.9" fill="#8090ff"/><circle cx="14.2" cy="13.6" r="0.9" fill="#b0ffa0"/></svg>
<div class="t" style="left:287px;top:617px;font-size:12px;"><u>I</u>nsert</div>
<div class="t" style="left:362px;top:617px;font-size:12px;">Ctrl+I</div>
<svg style="position:absolute;left:262px;top:634px;" width="19" height="19" viewBox="0 0 19 19"><path d="M4 3 L16 16 M15.5 3 L3.5 16.5" stroke="#a03000" stroke-width="4.6" stroke-linecap="round"/><path d="M4 3 L16 16 M15.5 3 L3.5 16.5" stroke="#f86410" stroke-width="3.2" stroke-linecap="round"/></svg>
<div class="t" style="left:287px;top:638px;font-size:12px;">Delete</div>
<div class="t" style="left:362px;top:638px;font-size:12px;">Del</div>
<div style="left:262px;top:657px;width:141px;height:1px;background:#C8B850"></div>
<div style="left:262px;top:658px;width:141px;height:1px;background:#F8F4D6"></div>
<svg style="position:absolute;left:262px;top:663px;" width="20" height="20" viewBox="0 0 20 20"><circle cx="10" cy="10" r="8" fill="#f8d0a0" opacity="0.7"/><rect x="3" y="3" width="14" height="14" rx="6" fill="#fff" stroke="#707070" stroke-width="0.7"/><path d="M5 9 Q6 5 10 5 Q13 5 14.5 7" fill="none" stroke="#000" stroke-width="1.8"/><path d="M15.5 4 L15.5 9 L11 8 Z" fill="#000"/><path d="M15 11 Q14 15 10 15 Q7 15 5.5 13" fill="none" stroke="#000" stroke-width="1.8"/><path d="M4.5 16 L4.5 11 L9 12 Z" fill="#000"/><path d="M6 9.5 H10 M10 10.5 H14" stroke="#f0a040" stroke-width="1"/></svg>
<div class="t" style="left:287px;top:668px;font-size:12px;">Refresh</div>
<div class="t" style="left:362px;top:668px;font-size:12px;">Ctrl+R</div>
</body></html>
